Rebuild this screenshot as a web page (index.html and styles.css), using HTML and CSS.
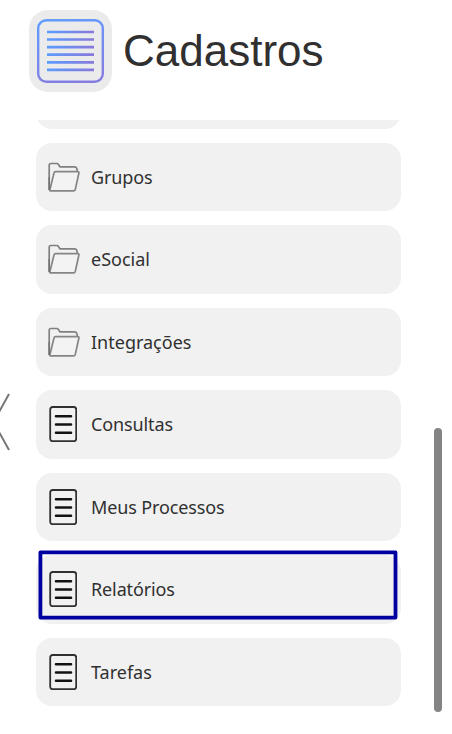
FILE: index.html
```html
<!DOCTYPE html>
<html lang="pt-br">
<head>
    <meta charset="UTF-8">
    <meta name="viewport" content="width=device-width, initial-scale=1.0">
    <title>Cadastros</title>
    <link rel="stylesheet" href="styles.css">
</head>
<body>
    <!-- símbolos usados no menu -->
    <svg class="symbols" width="0" height="0">
        <symbol id="folder" viewBox="0 0 32 30">
            <path d="M1.2 28V3.4Q1.2 1.5 2.8 1.5H8.8Q9.8 1.5 10.4 2.5L12 4.8H26.5Q28.4 4.8 28.8 6.4L29.4 9.4" fill="none" stroke="#808080" stroke-width="1.7"/>
            <path d="M1.8 28L6 11Q6.3 9.6 7.5 9.6H29.8Q31.2 9.6 30.9 11L27.3 27.4Q26.9 28.8 25.5 28.8H2.4Q1.5 28.8 1.8 28Z" fill="#f3f3f3" stroke="#858585" stroke-width="1.7"/>
            <path d="M1.2 15V28" stroke="#707070" stroke-width="1.4"/>
        </symbol>
        <symbol id="sheet" viewBox="0 0 28 36">
            <rect x="1.2" y="1" width="26" height="34.2" rx="2.4" fill="none" stroke="#303030" stroke-width="1.8"/>
            <path d="M7 10.2H22M7 18.5H22M7 26.8H22" stroke="#111" stroke-width="2.6" stroke-linecap="round"/>
        </symbol>
    </svg>

    <header class="header">
        <div class="header-icon">
            <svg width="67" height="64" viewBox="0 0 67 64" fill="none">
                <defs>
                    <linearGradient id="frame" gradientUnits="userSpaceOnUse" x1="14" y1="0" x2="30" y2="64">
                        <stop offset="0" stop-color="#629cff"/>
                        <stop offset="1" stop-color="#857ee2"/>
                    </linearGradient>
                    <linearGradient id="lines" gradientUnits="userSpaceOnUse" x1="10" y1="0" x2="57" y2="0">
                        <stop offset="0" stop-color="#5b9cff"/>
                        <stop offset="1" stop-color="#8878da"/>
                    </linearGradient>
                </defs>
                <rect x="1.2" y="1.2" width="64.6" height="61.6" rx="8" stroke="url(#frame)" stroke-width="2.4"/>
                <path d="M10 13H57M10 20.5H57M10 28.1H57M10 35.7H57M10 43.3H57M10 50.9H57" stroke="url(#lines)" stroke-width="2.7"/>
            </svg>
        </div>
        <h1 class="title">Cadastros</h1>
    </header>

    <main class="content">
        <div class="back">
            <svg width="12" height="60" viewBox="0 0 12 60">
                <path d="M9 2L-6.5 30L9 58" fill="none" stroke="#777" stroke-width="2"/>
            </svg>
        </div>
        <nav class="menu">
            <a class="item"></a>
            <a class="item"><svg class="icon-folder"><use href="#folder"/></svg><span class="label">Grupos</span></a>
            <a class="item"><svg class="icon-folder"><use href="#folder"/></svg><span>eSocial</span></a>
            <a class="item"><svg class="icon-folder"><use href="#folder"/></svg><span>Integrações</span></a>
            <a class="item"><svg class="icon-sheet"><use href="#sheet"/></svg><span class="label">Consultas</span></a>
            <a class="item"><svg class="icon-sheet"><use href="#sheet"/></svg><span class="label">Meus Processos</span></a>
            <a class="item">
                <svg class="icon-sheet"><use href="#sheet"/></svg><span class="label">Relatórios</span>
                <svg class="outline" width="360" height="70" viewBox="0 0 360 70">
                    <rect x="2.4" y="2.4" width="355.1" height="65.2" fill="none" stroke="#0000a0" stroke-width="3.8" stroke-linejoin="round"/>
                </svg>
            </a>
            <a class="item"><svg class="icon-sheet"><use href="#sheet"/></svg><span>Tarefas</span></a>
        </nav>
        <div class="scrollbar">
            <div class="thumb"></div>
        </div>
    </main>
</body>
</html>
```
FILE: styles.css
```css
body {
    margin: 0;
    height: 734px;
    overflow: hidden;
    background-color: #fff;
    color: #303030;
    font-family: "Noto Sans", sans-serif;
}
.symbols {
    display: block;
}
.header {
    display: flex;
    align-items: flex-start;
    gap: 11px;
    box-sizing: border-box;
    height: 120px;
    padding: 10px 0 0 29px;
}
.header-icon {
    display: flex;
    box-sizing: border-box;
    width: 83px;
    height: 82px;
    padding: 9px 0 0 8px;
    border-radius: 19px;
    background-color: #ebebeb;
}
.title {
    margin: 16px 0 0;
    font: 44px/50px "Liberation Sans", Arial, sans-serif;
}
.content {
    display: grid;
    grid-template-columns: 36px 365px 1fr;
    height: 614px;
}
.back {
    padding-top: 272px;
}
/* a lista fica rolada até o fim */
.menu {
    display: flex;
    flex-direction: column;
    justify-content: flex-end;
    gap: 14.1px;
    height: 586px;
    overflow: hidden;
}
.item {
    position: relative;
    display: flex;
    flex: none;
    align-items: center;
    box-sizing: border-box;
    height: 68.4px;
    padding-left: 12px;
    border-radius: 16px;
    background-color: #f1f1f1;
    font-size: 18px;
    line-height: 24px;
    white-space: nowrap;
}
.label {
    letter-spacing: -0.12px;
}
.icon-folder {
    width: 32px;
    height: 30px;
    margin-right: 11px;
}
.icon-sheet {
    width: 28px;
    height: 36px;
    margin: 0 14px 0 1px;
}
.outline {
    position: absolute;
    top: -5px;
    left: 2px;
}
.scrollbar {
    padding: 308px 0 0 33px;
}
.thumb {
    width: 8px;
    height: 284px;
    border-radius: 4px;
    background-color: #848484;
}
```
